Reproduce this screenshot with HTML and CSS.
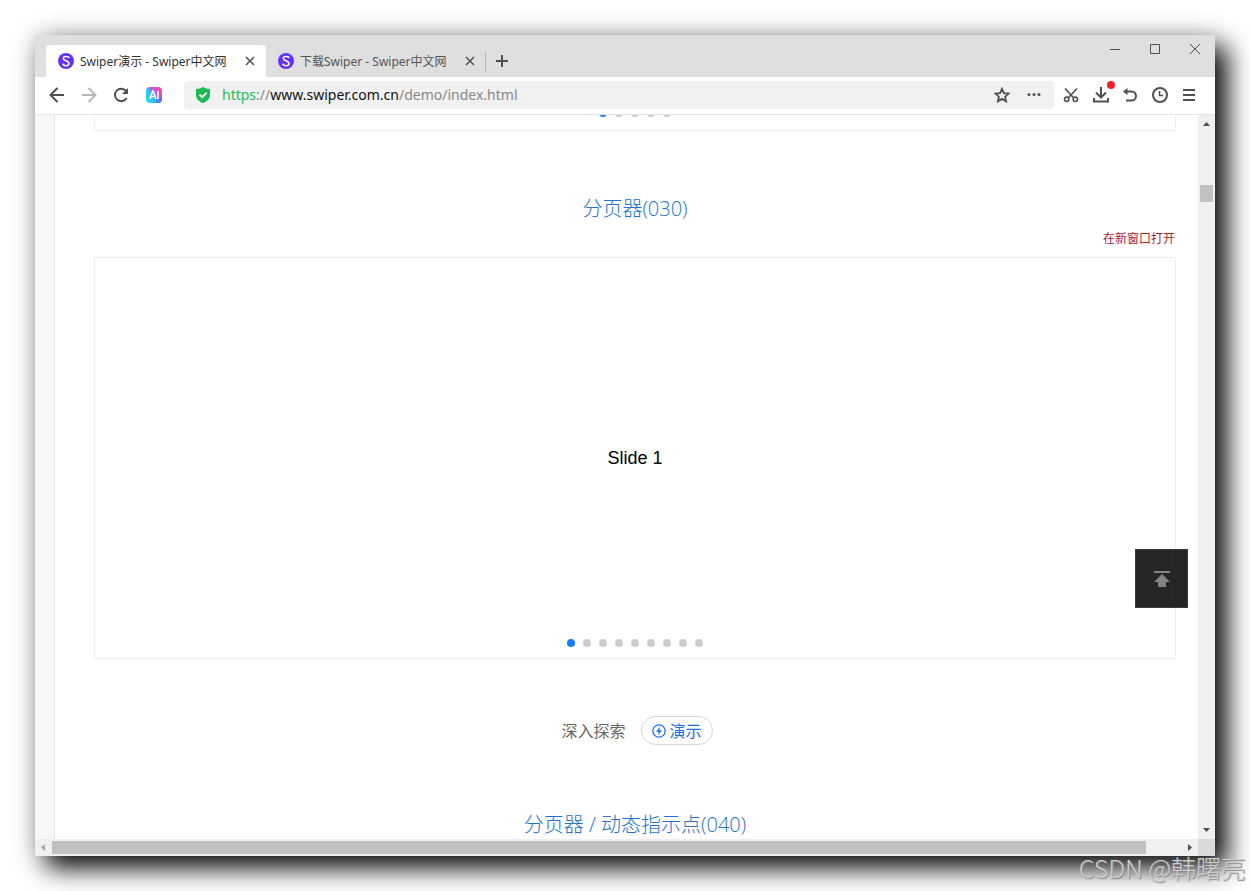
FILE: index.html
```html
<!DOCTYPE html>
<html lang="zh-CN">
<head>
    <meta charset="UTF-8">
    <meta name="viewport" content="width=device-width, initial-scale=1.0">
    <title>Swiper演示 - Swiper中文网</title>
    <link rel="stylesheet" href="styles.css">
</head>
<body>
    <div class="window">
        <header class="tabbar">
            <div class="tab active">
                <svg class="favicon" viewBox="0 0 16 16"><circle cx="8" cy="8" r="8" fill="#6332f6"/><path d="M11 5.200C10.700 3 5.300 2.700 5.300 5.400c0 2.800 5.600 2 5.600 5 0 3.100-5.700 2.800-6.100.3" fill="none" stroke="#fff" stroke-width="1.500"/></svg>
                <a href="#" class="tab-title">Swiper演示 - Swiper中文网</a>
                <button class="tab-close" aria-label="关闭"><svg viewBox="0 0 10 10"><path d="M1 1l8 8M9 1l-8 8"/></svg></button>
            </div>
            <div class="tab">
                <svg class="favicon" viewBox="0 0 16 16"><circle cx="8" cy="8" r="8" fill="#6332f6"/><path d="M11 5.200C10.700 3 5.300 2.700 5.300 5.400c0 2.800 5.600 2 5.600 5 0 3.100-5.700 2.800-6.100.3" fill="none" stroke="#fff" stroke-width="1.500"/></svg>
                <a href="#" class="tab-title">下载Swiper - Swiper中文网</a>
                <button class="tab-close" aria-label="关闭"><svg viewBox="0 0 10 10"><path d="M1 1l8 8M9 1l-8 8"/></svg></button>
            </div>
            <button class="new-tab" aria-label="新标签页"><svg viewBox="0 0 12 12"><path d="M6 0v12M0 6h12"/></svg></button>
            <div class="controls">
                <button aria-label="最小化"><svg viewBox="0 0 12 12"><path d="M1 6.500h10"/></svg></button>
                <button aria-label="最大化"><svg viewBox="0 0 12 12"><path d="M1.500 1.500h9v9h-9z"/></svg></button>
                <button aria-label="关闭窗口"><svg viewBox="0 0 12 12"><path d="M1 1l10 10M11 1L1 11"/></svg></button>
            </div>
        </header>

        <nav class="toolbar">
            <div class="nav-buttons">
                <button aria-label="后退"><svg viewBox="0 0 16 16"><path d="M15 8H2M8.500 1L1.500 8l7 7"/></svg></button>
                <button aria-label="前进" class="disabled"><svg viewBox="0 0 16 16"><path d="M1 8h13M7.500 1l7 7-7 7"/></svg></button>
                <button aria-label="刷新"><svg viewBox="0 0 16 16"><path d="M13.600 11A6.200 6.200 0 1 1 13 4"/><path d="M15 1v6H9z" class="solid"/></svg></button>
                <button aria-label="AI">
                    <svg viewBox="0 0 16 16">
                        <defs>
                            <linearGradient id="ai" x1="0" y1=".9" x2="1" y2=".2"><stop offset="0" stop-color="#1fe3ee"/><stop offset=".4" stop-color="#2fc4f3"/><stop offset=".65" stop-color="#c04ee6"/><stop offset="1" stop-color="#ff4f91"/></linearGradient>
                            <radialGradient id="ai-blue" cx="1" cy="1" r=".6"><stop offset="0" stop-color="#2f7df8"/><stop offset="1" stop-color="#2f7df8" stop-opacity="0"/></radialGradient>
                        </defs>
                        <rect width="16" height="16" rx="4" fill="url(#ai)" stroke="none"/>
                        <rect width="16" height="16" rx="4" fill="url(#ai-blue)" stroke="none"/>
                        <path d="M4 12l2.700-8h.6L10 12M5 9.500h4M12 4v8" stroke="#fff" stroke-width="1.600"/>
                    </svg>
                </button>
            </div>
            <div class="address">
                <svg class="shield" viewBox="0 0 14 16"><path d="M7 0c2 1.400 4.500 1.800 7 1.900V8c0 4-3 6.500-7 8-4-1.500-7-4-7-8V1.900C2.500 1.800 5 1.400 7 0z" fill="#1db954"/><path d="M3.500 7.500l2.700 2.700 4.500-4.600" fill="none" stroke="#fff" stroke-width="1.800"/></svg>
                <a href="#" class="url"><span class="scheme">https</span>://<span class="host">www.swiper.com.cn</span>/demo/index.html</a>
                <button aria-label="收藏"><svg viewBox="0 0 16 16"><path d="M8 1.800l1.900 4.300 4.700.5-3.500 3.100 1 4.600L8 11.900l-4.100 2.400 1-4.600-3.500-3.100 4.700-.5z"/></svg></button>
                <button aria-label="更多"><svg viewBox="0 0 16 16"><g class="solid"><circle cx="3" cy="7.500" r="1.500"/><circle cx="8" cy="7.500" r="1.500"/><circle cx="13" cy="7.500" r="1.500"/></g></svg></button>
            </div>
            <div class="tools">
                <button aria-label="截图"><svg viewBox="0 0 16 16" class="thin"><path d="M2 1.500l8.800 9.500M14 1.500L5.200 11"/><circle cx="3.700" cy="12.300" r="2.200"/><circle cx="12.300" cy="12.300" r="2.200"/></svg></button>
                <button aria-label="下载" class="download"><svg viewBox="0 0 16 16"><path d="M8 0v10M3 5.500l5 5 5-5M1 11v3.500h14V11"/></svg><span class="badge"></span></button>
                <button aria-label="恢复"><svg viewBox="0 0 16 16"><path d="M3 4.500h6.500a4.500 4.500 0 0 1 0 9H4"/><path d="M1 4.500l4.500-3.500v7z" class="solid"/></svg></button>
                <button aria-label="历史"><svg viewBox="0 0 16 16"><circle cx="8" cy="8" r="7"/><path d="M7.500 4v4.500H11" stroke-width="1.500"/></svg></button>
                <button aria-label="菜单"><svg viewBox="0 0 16 16"><path d="M2 3h12M2 8h12M2 13h12"/></svg></button>
            </div>
        </nav>

        <div class="view">
            <main class="page">
                <section class="demo-box partial">
                    <div class="pagination">
                        <span class="bullet on"></span><span class="bullet"></span><span class="bullet"></span><span class="bullet"></span><span class="bullet"></span>
                    </div>
                </section>
                <h2>分页器(030)</h2>
                <a href="#" class="open-link">在新窗口打开</a>
                <section class="demo-box">
                    <div class="slide">Slide 1</div>
                    <div class="pagination">
                        <span class="bullet on"></span><span class="bullet"></span><span class="bullet"></span><span class="bullet"></span><span class="bullet"></span><span class="bullet"></span><span class="bullet"></span><span class="bullet"></span><span class="bullet"></span>
                    </div>
                </section>
                <div class="explore">
                    <span>深入探索</span>
                    <a href="#" class="demo-link">
                        <svg viewBox="0 0 14 14"><circle cx="7" cy="7" r="6.200" fill="none" stroke="#1b6fe8" stroke-width="1.300"/><path d="M8 2.800L4 7.800h2.600L6 11.200l4-5H7.400z" fill="#1b6fe8"/></svg>
                        演示
                    </a>
                </div>
                <h2>分页器 / 动态指示点(040)</h2>
            </main>
            <div class="scroll-y">
                <svg class="arrow" viewBox="0 0 7 4"><path d="M0 4h7L3.500 0z"/></svg>
                <div class="thumb"></div>
                <svg class="arrow" viewBox="0 0 7 4"><path d="M0 0h7L3.500 4z"/></svg>
            </div>
            <div class="scroll-x">
                <svg class="arrow off" viewBox="0 0 4 7"><path d="M4 0v7L0 3.500z"/></svg>
                <div class="thumb"></div>
                <svg class="arrow" viewBox="0 0 4 7"><path d="M0 0v7l4-3.500z"/></svg>
            </div>
            <div class="corner"></div>
            <button class="to-top" aria-label="返回顶部"><svg viewBox="0 0 16 16"><path d="M0 0h16v2H0zM8 3l8 8h-4v5H4v-5H0z"/></svg></button>
        </div>
    </div>
    <div class="watermark">CSDN @韩曙亮</div>
</body>
</html>
```

FILE: styles.css
```css
* {
    box-sizing: border-box;
}
body {
    margin: 0;
    padding: 35px;
    height: 100vh;
    overflow: hidden;
    background: #fff;
    font-family: "Open Sans", "Noto Sans CJK SC", sans-serif;
}
a {
    color: inherit;
    text-decoration: none;
}
button {
    display: flex;
    align-items: center;
    justify-content: center;
    padding: 0;
    border: 0;
    background: none;
}
button svg {
    width: 16px;
    height: 16px;
    fill: none;
    stroke: #505050;
    stroke-width: 2;
}
button svg .solid {
    fill: #505050;
    stroke: none;
}
.window {
    display: flex;
    flex-direction: column;
    height: 100%;
    box-shadow: 12px 12px 24px rgba(0, 0, 0, 0.95), 0 0 26px rgba(0, 0, 0, 0.2);
}

/* tabs */
.tabbar {
    display: flex;
    align-items: flex-end;
    height: 42px;
    padding-left: 11px;
    background: #dfdfdf;
}
.tab {
    display: flex;
    align-items: center;
    width: 220px;
    height: 32px;
    padding: 0 10px 0 12px;
    color: #555;
    font-family: "Noto Sans", "Noto Sans CJK SC", sans-serif;
    font-size: 12px;
    position: relative;
}
.tab.active {
    background: #fff;
    border-radius: 4px 4px 0 0;
    color: #333;
}
.tab:not(.active)::after {
    content: "";
    position: absolute;
    right: 0;
    top: 7px;
    width: 1px;
    height: 20px;
    background: #b8b8b8;
}
.favicon {
    width: 16px;
    height: 16px;
    margin-right: 6px;
}
.tab-title {
    flex: 1;
    white-space: nowrap;
}
.tab-close svg {
    width: 10px;
    height: 10px;
    stroke-width: 1.5;
}
.tab-close {
    width: 12px;
}
.new-tab {
    width: 32px;
    height: 32px;
}
.new-tab svg {
    width: 12px;
    height: 12px;
}
.controls {
    display: flex;
    align-self: flex-start;
    margin-left: auto;
}
.controls button {
    width: 40px;
    height: 28px;
}
.controls svg {
    width: 12px;
    height: 12px;
    stroke-width: 1;
}

/* address row */
.toolbar {
    display: flex;
    align-items: center;
    height: 38px;
    padding-bottom: 1px;
    background: #fff;
    border-bottom: 1px solid #e3e5e6;
}
.nav-buttons {
    display: flex;
    gap: 16px;
    padding: 0 22px 0 14px;
}
.nav-buttons .disabled {
    opacity: 0.4;
}
.nav-buttons button:last-child {
    margin-left: 1px;
}
.address {
    display: flex;
    align-items: center;
    flex: 1;
    gap: 16px;
    height: 28px;
    padding: 0 12px;
    background: #f1f1f1;
    border-radius: 4px;
}
.shield {
    width: 14px;
    height: 16px;
}
.url {
    flex: 1;
    margin-left: -4px;
    padding-bottom: 2px;
    color: #888;
    font-family: "Noto Sans", sans-serif;
    font-size: 14px;
}
.scheme {
    color: #23c05a;
}
.host {
    color: #111;
}
.address button svg {
    stroke-width: 1.8;
}
.tools {
    display: flex;
    justify-content: space-between;
    width: 161px;
    padding: 0 18px 0 9px;
}
.tools .thin {
    stroke-width: 1.6;
}
.download {
    position: relative;
}
.badge {
    position: absolute;
    top: -6px;
    right: -6px;
    width: 8px;
    height: 8px;
    border-radius: 50%;
    background: #f5222d;
}

/* page */
.view {
    position: relative;
    display: grid;
    grid-template: minmax(0, 1fr) 17px / minmax(0, 1fr) 17px;
    flex: 1;
    min-height: 0;
}
.page {
    display: flex;
    flex-direction: column;
    overflow: hidden;
    padding: 0 22px 0 40px;
    border-left: 19px solid #f7f7f7;
    background: linear-gradient(to right, #e3e3e3 1px, #fff 1px);
    background-origin: padding-box;
}
.demo-box {
    display: flex;
    flex-direction: column;
    flex-shrink: 0;
    height: 402px;
    border: 1px solid #eee;
    border-radius: 2px;
    padding-bottom: 11px;
}
.demo-box.partial {
    justify-content: flex-end;
    height: 16px;
    border-top: 0;
    border-radius: 0 0 2px 2px;
    padding-bottom: 13px;
}
.slide {
    display: flex;
    flex: 1;
    align-items: center;
    justify-content: center;
    padding-top: 20px;
    font: 18px "Liberation Sans", Arial, sans-serif;
    color: #000;
}
.pagination {
    display: flex;
    justify-content: center;
    gap: 8px;
}
.bullet {
    width: 8px;
    height: 8px;
    border-radius: 50%;
    background: #ccc;
}
.bullet.on {
    background: #177dff;
}
h2 {
    margin: 63px 0 0;
    color: #2372cd;
    font-size: 20px;
    font-weight: 300;
    line-height: 30px;
    text-align: center;
}
.open-link {
    align-self: flex-end;
    margin: 6px 1px 9px 0;
    color: #b3202a;
    font-size: 12px;
    line-height: 18px;
}
.explore {
    display: flex;
    align-items: center;
    justify-content: center;
    gap: 15px;
    margin: 57px 0 2px;
    padding-left: 4px;
    color: #666;
    font-size: 16px;
    line-height: 24px;
}
.demo-link {
    display: flex;
    align-items: center;
    gap: 4px;
    height: 29px;
    padding: 0 10px;
    border: 1px solid #d5d5d5;
    border-radius: 15px;
    color: #1b6fe8;
}
.demo-link svg {
    width: 14px;
    height: 14px;
}

/* scroll bars */
.scroll-y,
.scroll-x {
    display: flex;
    align-items: center;
    background: #f0f0f0;
}
.scroll-y {
    flex-direction: column;
    padding: 7px 0;
}
.scroll-x {
    padding: 0 6px;
}
.scroll-y .arrow {
    width: 7px;
    height: 4px;
}
.scroll-x .arrow {
    width: 4px;
    height: 7px;
}
.arrow {
    fill: #505050;
}
.arrow.off {
    fill: #a3a3a3;
}
.thumb {
    background: #c1c1c1;
}
.scroll-y .thumb {
    width: 13px;
    height: 17px;
    margin: 59px 0 auto;
}
.scroll-x .thumb {
    flex: 1;
    height: 13px;
    margin: 0 42px 0 7px;
}
.corner {
    background: #dadada;
}
.to-top {
    position: absolute;
    right: 27px;
    bottom: 248px;
    width: 53px;
    height: 59px;
    border: 1px solid #3c3c3c;
    background: rgba(0, 0, 0, 0.85);
}
.to-top svg {
    fill: #828282;
    stroke: none;
}
.watermark {
    position: absolute;
    right: 4px;
    bottom: 6px;
    color: #ccc;
    font: 300 25px/36px "Noto Sans CJK SC", sans-serif;
    text-shadow: 1px 1px 1px #888;
}
```
